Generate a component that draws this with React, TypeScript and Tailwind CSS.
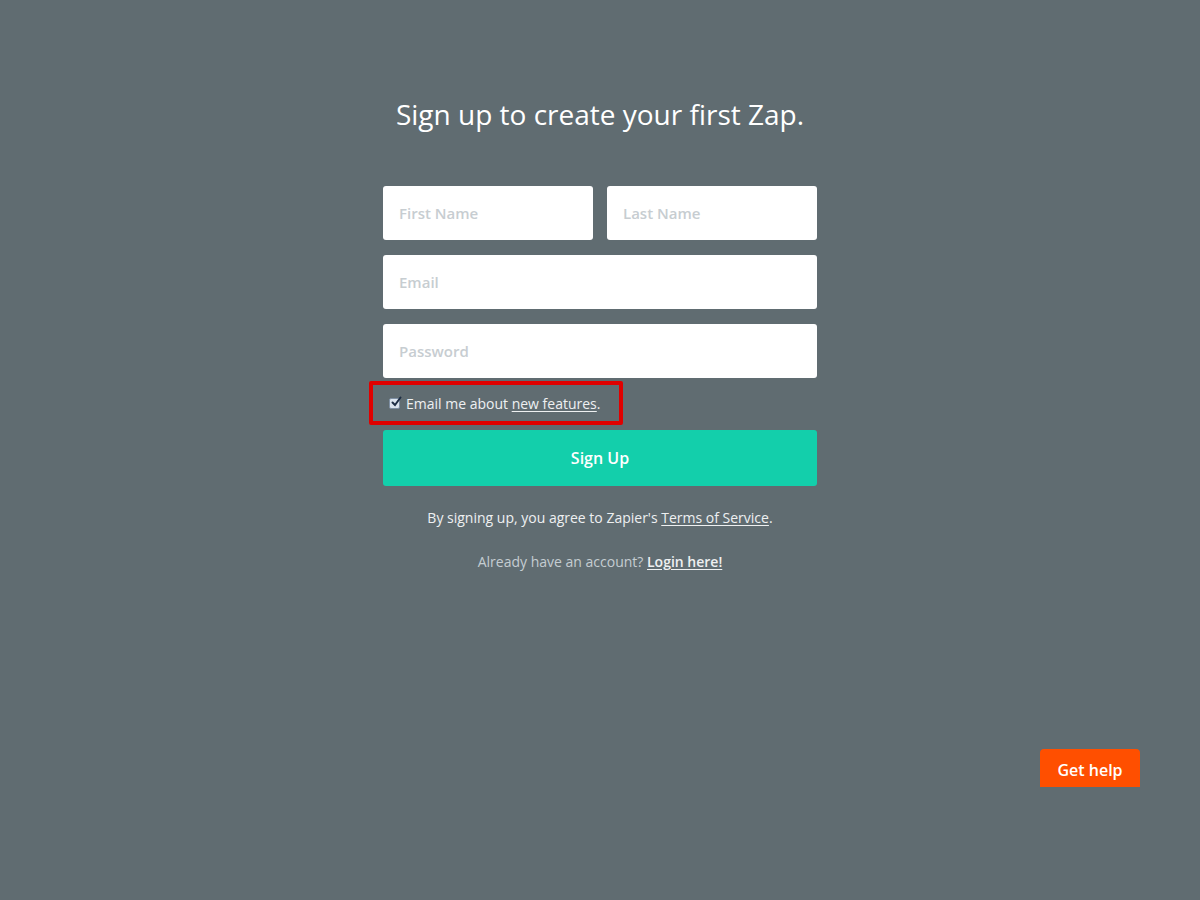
export default function App() {
  return (
    <div
      className="relative w-full h-[900px] bg-[#606c71] flex flex-col items-center"
      style={{ fontFamily: '"Open Sans", sans-serif' }}
    >
      <h1 className="mt-[94px] text-[28px] leading-[40px] text-white font-normal">
        Sign up to create your first Zap.
      </h1>

      <form className="mt-[52px] w-[434px] flex flex-col">
        <div className="flex gap-[14px]">
          <input
            placeholder="First Name"
            className="w-[210px] h-[54px] rounded-[3px] bg-white px-4 text-[15px] font-semibold text-gray-700 placeholder:text-[#c7cdd1] outline-none"
          />
          <input
            placeholder="Last Name"
            className="w-[210px] h-[54px] rounded-[3px] bg-white px-4 text-[15px] font-semibold text-gray-700 placeholder:text-[#c7cdd1] outline-none"
          />
        </div>
        <input
          placeholder="Email"
          className="mt-[15px] h-[54px] rounded-[3px] bg-white px-4 text-[15px] font-semibold text-gray-700 placeholder:text-[#c7cdd1] outline-none"
        />
        <input
          type="password"
          placeholder="Password"
          className="mt-[15px] h-[54px] rounded-[3px] bg-white px-4 text-[15px] font-semibold text-gray-700 placeholder:text-[#c7cdd1] outline-none"
        />

        <div className="mt-[3px] -ml-[14px] w-[254px] h-[44px] border-4 border-[#e00000] rounded-[2px] flex items-center pl-[16px] gap-[6px]">
          {/* checkbox, drawn like the native one in the shot */}
          <span className="relative w-[11px] h-[11px] rounded-[2px] bg-[#dbe4ee] border border-[#7e8fa3] shrink-0">
            <svg viewBox="0 0 12 12" className="absolute -top-[3px] left-0 w-[12px] h-[12px]">
              <path d="M2.5 6.5 L5 9 L10.5 1.5" fill="none" stroke="#1d2d44" strokeWidth="2" strokeLinecap="round" />
            </svg>
          </span>
          <span className="text-[14px] text-[#eef0f1]">
            Email me about <a className="underline underline-offset-2">new features</a>.
          </span>
        </div>

        <button
          type="button"
          className="mt-[5px] h-[56px] rounded-[3px] bg-[#13cfab] text-white text-[16px] font-semibold"
        >
          Sign Up
        </button>
      </form>

      <p className="mt-[21px] text-[14px] text-[#eef0f1]">
        By signing up, you agree to Zapier's <a className="underline underline-offset-2">Terms of Service</a>.
      </p>
      <p className="mt-[23px] text-[14px] text-[#c5cdd1]">
        Already have an account? <a className="underline underline-offset-2 text-[#eef0f1] font-semibold">Login here!</a>
      </p>

      <button
        type="button"
        className="absolute left-[1040px] top-[749px] w-[100px] h-[38px] pt-[3px] rounded-t-[4px] bg-[#ff4f00] text-white text-[16px] font-semibold"
      >
        Get help
      </button>
    </div>
  )
}
